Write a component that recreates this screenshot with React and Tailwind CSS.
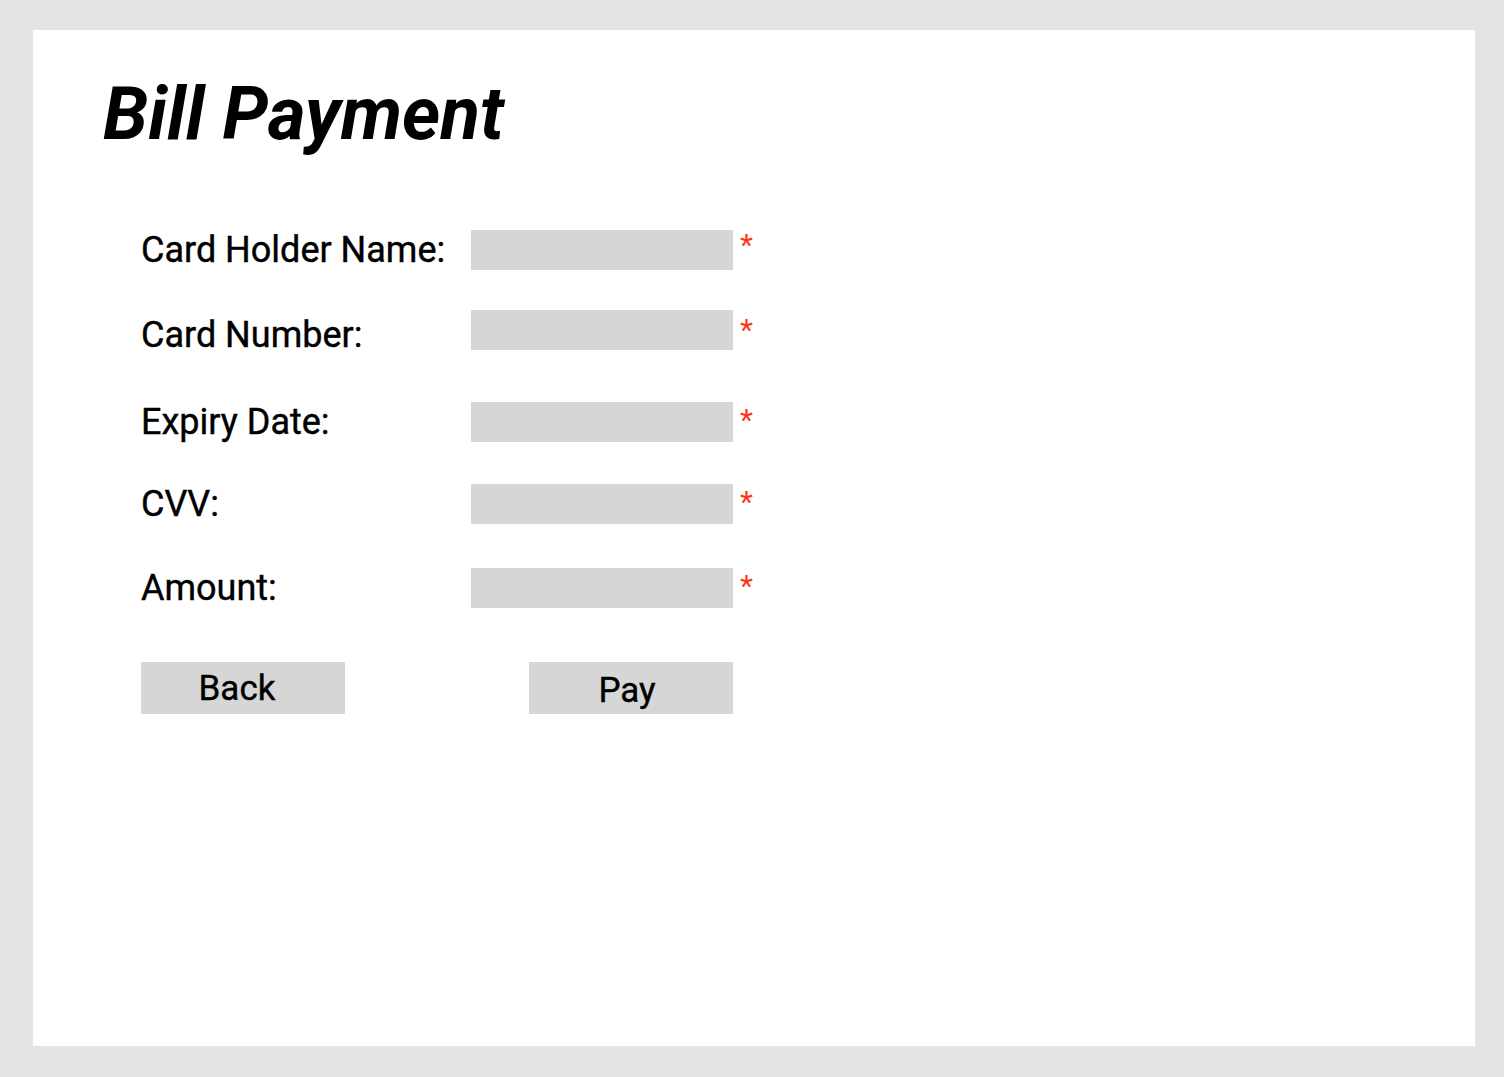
import React from "react";

const fields = [
  { label: "Card Holder Name:", mt: "mt-0", lbl: "pt-0", star: "pt-[1px]" },
  { label: "Card Number:", mt: "mt-[40px]", lbl: "pt-[10px]", star: "pt-[6px]" },
  { label: "Expiry Date:", mt: "mt-[52px]", lbl: "pt-0", star: "pt-[4px]" },
  { label: "CVV:", mt: "mt-[42px]", lbl: "pt-0", star: "pt-[4px]" },
  { label: "Amount:", mt: "mt-[44px]", lbl: "pt-0", star: "pt-[4px]" },
];

const BillPayment = () => {
  return (
    <div className="min-h-screen bg-[#e4e4e4] pl-[33px] pt-[30px] pb-[31px] pr-[29px] font-['Roboto',sans-serif] text-black">
      <div className="h-[1016px] w-[1442px] bg-white">
        <h1 className="pl-[70px] pt-[42px] text-[73px] font-bold italic leading-[84px]">
          Bill Payment
        </h1>

        <form className="ml-[108px] mt-[74px]">
          {fields.map((f) => (
            <div key={f.label} className={`flex h-[40px] items-center ${f.mt}`}>
              <label className={`w-[330px] text-[36px] leading-none [-webkit-text-stroke:0.4px_black] ${f.lbl}`}>
                {f.label}
              </label>
              <input
                type="text"
                className="h-[40px] w-[262px] bg-[#d6d6d6] outline-none"
              />
              <span className={`ml-[7px] self-start text-[30px] leading-[28px] text-[#ff3419] ${f.star}`}>
                *
              </span>
            </div>
          ))}

          <div className="mt-[54px] flex w-[592px] justify-between">
            <button
              type="button"
              className="h-[52px] w-[204px] bg-[#d6d6d6] pr-[12px] text-[35px] leading-none [-webkit-text-stroke:0.4px_black]"
            >
              Back
            </button>
            <button
              type="button"
              className="h-[52px] w-[204px] bg-[#d6d6d6] pr-[8px] pt-[4px] text-[35px] leading-none [-webkit-text-stroke:0.4px_black]"
            >
              Pay
            </button>
          </div>
        </form>
      </div>
    </div>
  );
};

export default BillPayment;
